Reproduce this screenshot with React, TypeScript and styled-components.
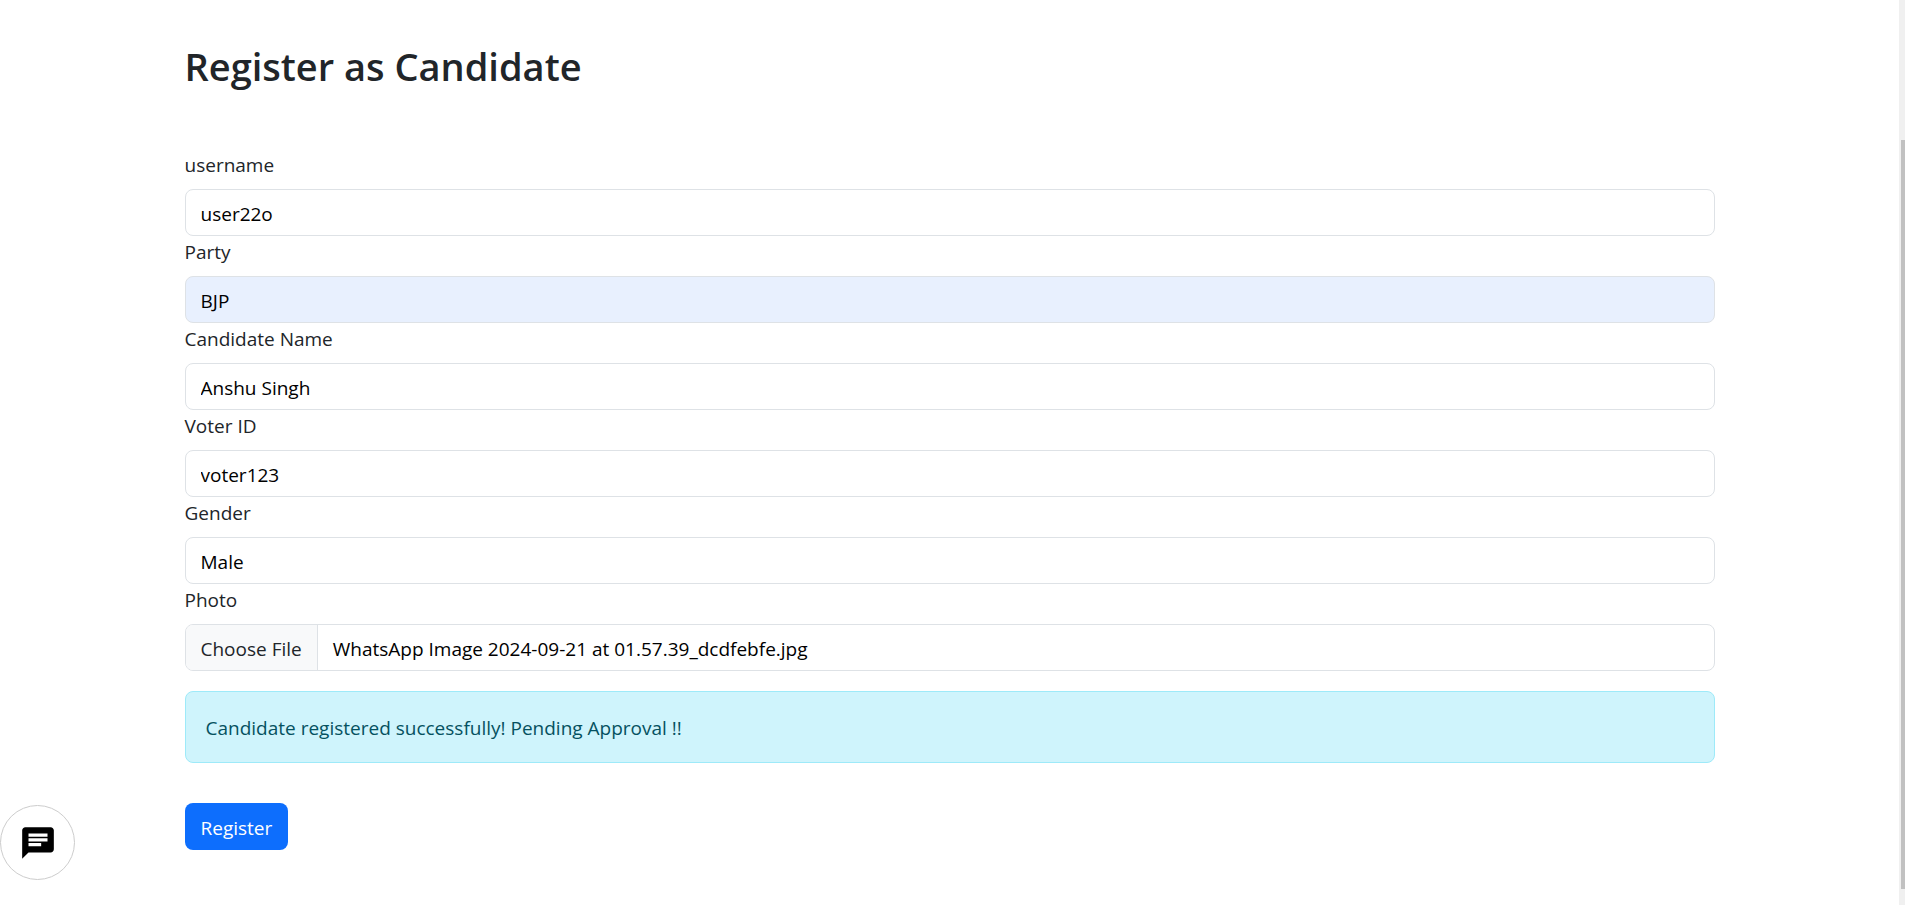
import React, { useState } from "react";
import styled, { createGlobalStyle } from "styled-components";
import { MdChat } from "react-icons/md";

const GlobalStyle = createGlobalStyle`
  *, *::before, *::after { box-sizing: border-box; }
  body {
    margin: 0;
    background: #fff;
    color: #212529;
    font-family: "Segoe UI", "Open Sans", "Noto Sans", sans-serif;
    font-size: 19px;
    line-height: 32px;
  }
`;

const Page = styled.div`
  display: grid;
  grid-template-columns: minmax(0, 1fr) 6px;
  min-height: 100vh;
`;

const Content = styled.main`
  width: 100%;
  max-width: 1650px;
  margin: 0 auto;
  padding: 42px 60px 48px;
`;

const Title = styled.h1`
  margin: 0 0 59px;
  font-size: 38px;
  font-weight: 600;
  line-height: 48px;
`;

const Form = styled.form`
  display: flex;
  flex-direction: column;
`;

const Field = styled.div`
  display: flex;
  flex-direction: column;
  gap: 8px;
`;

const Label = styled.label`
  align-self: flex-start;
`;

const TextInput = styled.input<{ $autofilled?: boolean }>`
  width: 100%;
  height: 47px;
  padding: 8px 15px 6px;
  border: 1px solid #dee2e6;
  border-radius: 8px;
  background: ${(p) => (p.$autofilled ? "#e8f0fe" : "#fff")};
  color: #000;
  font: inherit;
`;

const FilePicker = styled.label`
  display: flex;
  height: 47px;
  overflow: hidden;
  border: 1px solid #dee2e6;
  border-radius: 8px;
  color: #000;
  cursor: pointer;
`;

const HiddenFileInput = styled.input`
  position: absolute;
  width: 1px;
  height: 1px;
  opacity: 0;
`;

const FileAction = styled.span`
  padding: 8px 15px 6px;
  border-right: 1px solid #dee2e6;
  background: #f8f9fa;
  color: #212529;
  white-space: nowrap;
`;

const FileName = styled.span`
  padding: 8px 15px 6px;
  overflow: hidden;
  text-overflow: ellipsis;
  white-space: nowrap;
`;

const Alert = styled.div`
  margin: 20px 0 40px;
  padding: 20px 20px 18px;
  border: 1px solid #9eeaf9;
  border-radius: 8px;
  background: #cff4fc;
  color: #055160;
`;

const SubmitButton = styled.button`
  align-self: flex-start;
  height: 47px;
  padding: 8px 16px 6px;
  border: 0;
  border-radius: 8px;
  background: #0d6efd;
  color: #fff;
  font: inherit;
  cursor: pointer;
`;

const ChatButton = styled.button`
  position: fixed;
  bottom: 25px;
  left: 0;
  display: flex;
  align-items: center;
  justify-content: center;
  width: 75px;
  height: 75px;
  padding: 0;
  border: 1px solid #ccc;
  border-radius: 50%;
  background: #fff;
  color: #000;
  cursor: pointer;
`;

const ScrollTrack = styled.div`
  position: sticky;
  top: 0;
  height: 100vh;
  padding: 140px 0 16px 2px;
  background: #f0f0f0;
`;

const ScrollThumb = styled.div`
  height: 100%;
  background: #c1c1c1;
`;

const fields = [
  { id: "username", label: "username", value: "user22o" },
  { id: "party", label: "Party", value: "BJP", autofilled: true },
  { id: "candidate-name", label: "Candidate Name", value: "Anshu Singh" },
  { id: "voter-id", label: "Voter ID", value: "voter123" },
  { id: "gender", label: "Gender", value: "Male" },
];

export default function App() {
  const [fileName, setFileName] = useState(
    "WhatsApp Image 2024-09-21 at 01.57.39_dcdfebfe.jpg"
  );

  return (
    <>
      <GlobalStyle />
      <Page>
        <Content>
          <Title>Register as Candidate</Title>
          <Form onSubmit={(e) => e.preventDefault()}>
            {fields.map((f) => (
              <Field key={f.id}>
                <Label htmlFor={f.id}>{f.label}</Label>
                <TextInput
                  id={f.id}
                  name={f.id}
                  type="text"
                  defaultValue={f.value}
                  $autofilled={f.autofilled}
                />
              </Field>
            ))}
            <Field>
              <Label htmlFor="photo">Photo</Label>
              <FilePicker>
                <HiddenFileInput
                  id="photo"
                  type="file"
                  accept="image/*"
                  onChange={(e) => {
                    const file = e.target.files?.[0];
                    if (file) setFileName(file.name);
                  }}
                />
                <FileAction>Choose File</FileAction>
                <FileName>{fileName}</FileName>
              </FilePicker>
            </Field>
            <Alert role="alert">
              Candidate registered successfully! Pending Approval !!
            </Alert>
            <SubmitButton type="submit">Register</SubmitButton>
          </Form>
        </Content>
        <ScrollTrack aria-hidden="true">
          <ScrollThumb />
        </ScrollTrack>
      </Page>
      <ChatButton type="button" aria-label="Open chat">
        <MdChat size={38} />
      </ChatButton>
    </>
  );
}
